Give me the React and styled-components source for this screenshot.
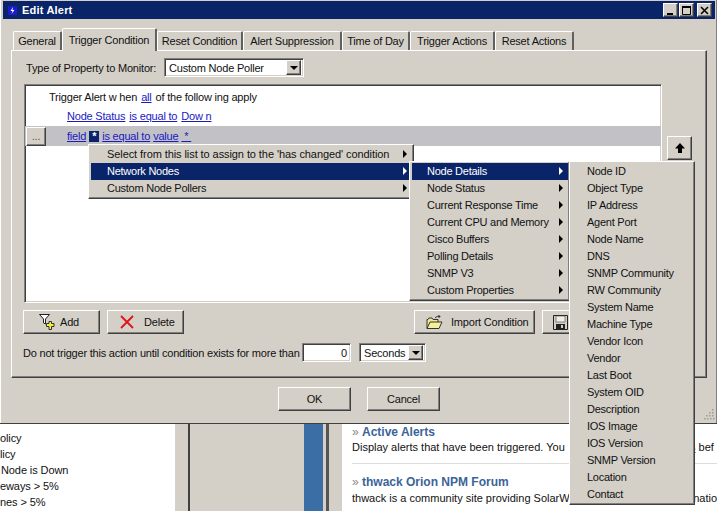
import React from "react";
import styled, { createGlobalStyle, css } from "styled-components";

const GlobalStyle = createGlobalStyle`
  html, body { margin: 0; padding: 0; background: #fff; }
  * { box-sizing: border-box; }
`;

const FACE = "#d4d0c8";
const NAVY = "#0a246a";

const raised = css`
  background: ${FACE};
  border: 1px solid;
  border-color: #fff #404040 #404040 #fff;
  box-shadow: inset -1px -1px 0 #808080;
`;
const sunken = css`
  background: #fff;
  border: 1px solid;
  border-color: #808080 #fff #fff #808080;
  box-shadow: inset 1px 1px 0 #404040, inset -1px -1px 0 ${FACE};
`;

const Page = styled.div`
  position: relative;
  width: 717px;
  height: 511px;
  overflow: hidden;
  font-family: "Liberation Sans", Arial, sans-serif;
  font-size: 11px;
  letter-spacing: -0.2px;
  color: #111;
`;

const Dialog = styled.div`
  position: relative;
  height: 424px;
  padding: 1px 2px 0 3px;
  background: ${FACE};
  border-bottom: 1px solid #404040;
  box-shadow: inset 1px 0 0 #fff, inset -1px 0 0 #808080;
`;

const TitleBar = styled.div`
  display: flex;
  align-items: center;
  height: 18px;
  padding: 0 3px 0 5px;
  gap: 5px;
  background: ${NAVY};
  color: #fff;
  font-weight: bold;
  letter-spacing: 0.2px;
`;
const TitleText = styled.span`
  flex: 1;
`;
const WinButtons = styled.div`
  display: flex;
`;
const WinButton = styled.div`
  ${raised}
  display: flex;
  align-items: center;
  justify-content: center;
  width: 15px;
  height: 14px;
  margin-left: ${(p) => p.$gap || 0}px;
`;

const TabStrip = styled.div`
  display: flex;
  align-items: flex-end;
  height: 31px;
  margin-left: 10px;
`;
const Tab = styled.div`
  display: flex;
  align-items: center;
  justify-content: center;
  width: ${(p) => p.$w}px;
  height: ${(p) => (p.$active ? 23 : 19)}px;
  background: ${FACE};
  border: 1px solid #fff;
  border-right: 2px solid #606060;
  border-bottom: none;
  border-radius: 2px 2px 0 0;
  position: relative;
  top: ${(p) => (p.$active ? 1 : 0)}px;
  z-index: ${(p) => (p.$active ? 2 : 0)};
`;

const Panel = styled.div`
  width: 696px;
  height: 328px;
  margin-left: 8px;
  padding: 7px 12px 0 12px;
  border: 1px solid;
  border-color: #fff #404040 #404040 #fff;
  box-shadow: inset -1px -1px 0 #808080;
`;
const TypeRow = styled.div`
  display: flex;
  align-items: center;
  height: 19px;
  padding-left: 2px;
`;
const Label = styled.span`
  width: ${(p) => p.$w}px;
  white-space: nowrap;
`;
const Select = styled.div`
  ${sunken}
  display: flex;
  align-items: center;
  justify-content: space-between;
  width: ${(p) => p.$w}px;
  height: 19px;
  padding: 0 2px 0 4px;
`;
const ArrowBox = styled.div`
  ${raised}
  display: flex;
  align-items: center;
  justify-content: center;
  width: 15px;
  height: 15px;
`;
const Caret = styled.span`
  width: 0;
  height: 0;
  border-left: 4px solid transparent;
  border-right: 4px solid transparent;
  border-top: 4px solid #000;
`;

const EditorRow = styled.div`
  display: flex;
  margin-top: 7px;
`;
const Editor = styled.div`
  ${sunken}
  width: 638px;
  height: 219px;
  padding-top: 3px;
`;
const Line = styled.div`
  display: flex;
  align-items: center;
  gap: ${(p) => p.$gap}px;
  height: ${(p) => p.$h}px;
  padding-left: ${(p) => p.$indent}px;
  background: ${(p) => (p.$selected ? "#c2c1c5" : "transparent")};
`;
const Link = styled.span`
  color: #1a1ac0;
  text-decoration: underline;
`;
const DotsButton = styled.div`
  ${raised}
  display: flex;
  align-items: center;
  justify-content: center;
  width: 20px;
  height: 19px;
  margin-right: 18px;
  color: #555;
`;
const StarMark = styled.span`
  display: flex;
  align-items: center;
  justify-content: center;
  width: 10px;
  height: 11px;
  background: ${NAVY};
  color: #fff;
  font-weight: bold;
`;
const UpButton = styled.div`
  ${raised}
  display: flex;
  align-items: center;
  justify-content: center;
  width: 25px;
  height: 24px;
  margin: 52px 0 0 5px;
`;

const ActionRow = styled.div`
  display: flex;
  justify-content: space-between;
  width: 639px;
  margin: 7px 0 0 -1px;
`;
const ButtonGroup = styled.div`
  display: flex;
  gap: 7px;
`;
const Button = styled.div`
  ${raised}
  display: flex;
  align-items: center;
  justify-content: ${(p) => (p.$pad ? "flex-start" : "center")};
  gap: ${(p) => p.$gap || 0}px;
  width: ${(p) => p.$w}px;
  height: 24px;
  padding-left: ${(p) => p.$pad || 0}px;
`;

const DelayRow = styled.div`
  display: flex;
  align-items: center;
  height: 19px;
  margin: 9px 0 0 -1px;
`;
const NumberBox = styled.div`
  ${sunken}
  display: flex;
  align-items: center;
  justify-content: flex-end;
  width: 49px;
  height: 19px;
  margin-right: 8px;
  padding-right: 3px;
`;

const Footer = styled.div`
  display: flex;
  justify-content: center;
  gap: 16px;
  margin-top: 9px;
`;
const Grip = styled.svg`
  position: absolute;
  right: 2px;
  bottom: 3px;
`;

const Behind = styled.div`
  display: flex;
  height: 87px;
`;
const ListPane = styled.div`
  width: 175px;
  padding-top: 6px;
  background: #fff;
  overflow: hidden;
  letter-spacing: -0.1px;
`;
const ListLine = styled.div`
  height: 16px;
  line-height: 16px;
  padding-left: ${(p) => p.$pad || 0}px;
  white-space: nowrap;
`;
const Strip = styled.div`
  width: ${(p) => p.$w}px;
  background: ${(p) => p.$c};
`;
const NewsPane = styled.div`
  flex: 1;
  padding: 0 0 0 11px;
  background: #fff;
  white-space: nowrap;
  overflow: hidden;
  letter-spacing: 0;
`;
const NewsItem = styled.div`
  height: 40px;
  margin-left: -1px;
  padding-top: ${(p) => p.$top}px;
  border-bottom: ${(p) => (p.$rule ? "1px solid #dcdcdc" : "none")};
`;
const NewsTitle = styled.div`
  height: ${(p) => p.$h}px;
  color: #3b6498;
  font-weight: bold;
  font-size: 12px;
`;
const Quote = styled.span`
  color: #888;
  font-weight: normal;
`;
const NewsText = styled.div`
  display: flex;
  height: 16px;
  line-height: 16px;
`;
const NewsLead = styled.span`
  width: ${(p) => p.$w}px;
  white-space: nowrap;
`;

const Menu = styled.div`
  ${raised}
  position: absolute;
  left: ${(p) => p.$left}px;
  top: ${(p) => p.$top}px;
  width: ${(p) => p.$w}px;
  padding: 1px 1px 1px 2px;
  z-index: ${(p) => p.$z};
`;
const MenuItem = styled.div`
  display: flex;
  align-items: center;
  justify-content: space-between;
  height: 17px;
  padding: 0 5px 1px ${(p) => p.$indent}px;
  background: ${(p) => (p.$on ? NAVY : "transparent")};
  color: ${(p) => (p.$on ? "#fff" : "#111")};
  letter-spacing: ${(p) => p.$track ?? -0.25}px;
  white-space: nowrap;
`;
const MenuArrow = styled.span`
  width: 0;
  height: 0;
  border-top: 4px solid transparent;
  border-bottom: 4px solid transparent;
  border-left: 4px solid ${(p) => (p.$on ? "#fff" : "#000")};
`;

const AppIcon = () => (
  <svg width="9" height="9" viewBox="0 0 9 9">
    <rect width="9" height="9" fill="#1c1ccc" />
    <path d="M5 1 L2.5 5 H4.5 L3.5 8 L6.5 4 H4.5 Z" fill="#fff" />
  </svg>
);
const MinGlyph = () => (
  <svg width="9" height="9" viewBox="0 0 9 9">
    <rect x="1" y="7" width="6" height="2" fill="#000" />
  </svg>
);
const MaxGlyph = () => (
  <svg width="9" height="9" viewBox="0 0 9 9">
    <path d="M0.5 1.5 H8.5 V8.5 H0.5 Z" fill="none" stroke="#000" />
    <rect y="0" width="9" height="2" fill="#000" />
  </svg>
);
const CloseGlyph = () => (
  <svg width="9" height="9" viewBox="0 0 9 9">
    <path d="M1 1 L8 8 M8 1 L1 8" stroke="#000" strokeWidth="1.6" />
  </svg>
);
const UpArrow = () => (
  <svg width="12" height="12" viewBox="0 0 12 12">
    <path d="M6 1 L11 6.5 H8 V11 H4 V6.5 H1 Z" fill="#000" />
  </svg>
);
const FilterAdd = () => (
  <svg width="16" height="17" viewBox="0 0 16 17">
    <path d="M0.5 0.5 H10.5 L6.5 5 V10 L4.5 9 V5 Z" fill="#fff" stroke="#222" />
    <path d="M7.5 9.5 H10 V7.5 H12.5 V9.5 H15 V12.5 H12.5 V15.5 H10 V12.5 H7.5 Z" fill="#f6ee3c" stroke="#333" />
  </svg>
);
const RedCross = () => (
  <svg width="14" height="14" viewBox="0 0 14 14">
    <path d="M1 1 L13 13 M13 1 L1 13" stroke="#e0121c" strokeWidth="1.8" />
  </svg>
);
const FolderOpen = () => (
  <svg width="17" height="15" viewBox="0 0 17 15">
    <path d="M1 13.5 V4.5 H2 L3 3 H6 L7 4.5 H12 V7" fill="#f3e98c" stroke="#333" />
    <path d="M1 13.5 L4 7 H16 L13 13.5 Z" fill="#f6ef9c" stroke="#333" />
    <path d="M9 3 Q11 0.5 14 1.5 M14 1.5 L12.5 0 M14 1.5 L12.5 3" fill="none" stroke="#333" />
  </svg>
);
const Floppy = () => (
  <svg width="15" height="15" viewBox="0 0 15 15">
    <path d="M0.5 0.5 H14.5 V14.5 H0.5 Z" fill="#d4d0c8" stroke="#222" />
    <rect x="3" y="1" width="9" height="6" fill="#eef0e8" stroke="#444" strokeWidth="0.6" />
    <rect x="3" y="9" width="9" height="5.5" fill="#222" />
    <rect x="8" y="10" width="2" height="3" fill="#d4d0c8" />
  </svg>
);
const GripDots = () => (
  <Grip width="11" height="11" viewBox="0 0 11 11">
    {[[8, 0], [5, 3], [8, 3], [2, 6], [5, 6], [8, 6], [0, 9], [3, 9], [6, 9], [9, 9]].map(([x, y]) => (
      <rect key={`${x}-${y}`} x={x} y={y} width="1.5" height="1.5" fill="#a09c94" />
    ))}
  </Grip>
);

const tabs = [
  { label: "General", w: 49 },
  { label: "Trigger Condition", w: 95, active: true },
  { label: "Reset Condition", w: 86 },
  { label: "Alert Suppression", w: 99 },
  { label: "Time of Day", w: 68 },
  { label: "Trigger Actions", w: 85 },
  { label: "Reset Actions", w: 79 },
];
const rootItems = [
  { label: "Select from this list to assign to the 'has changed' condition", track: -0.08 },
  { label: "Network Nodes" },
  { label: "Custom Node Pollers" },
];
const groupItems = ["Node Details", "Node Status", "Current Response Time", "Current CPU and Memory", "Cisco Buffers", "Polling Details", "SNMP V3", "Custom Properties"];
const fieldItems = ["Node ID", "Object Type", "IP Address", "Agent Port", "Node Name", "DNS", "SNMP Community", "RW Community", "System Name", "Machine Type", "Vendor Icon", "Vendor", "Last Boot", "System OID", "Description", "IOS Image", "IOS Version", "SNMP Version", "Location", "Contact"];
const listLines = [
  { text: "olicy" },
  { text: "licy" },
  { text: "Node is Down", pad: 1 },
  { text: "eways > 5%" },
  { text: "nes > 5%" },
];

export default function App() {
  return (
    <Page>
      <GlobalStyle />
      <Dialog>
        <TitleBar>
          <AppIcon />
          <TitleText>Edit Alert</TitleText>
          <WinButtons>
            <WinButton><MinGlyph /></WinButton>
            <WinButton $gap={1}><MaxGlyph /></WinButton>
            <WinButton $gap={3}><CloseGlyph /></WinButton>
          </WinButtons>
        </TitleBar>
        <TabStrip>
          {tabs.map((tab) => (
            <Tab key={tab.label} $w={tab.w} $active={tab.active}>{tab.label}</Tab>
          ))}
        </TabStrip>
        <Panel>
          <TypeRow>
            <Label $w={138}>Type of Property to Monitor:</Label>
            <Select $w={140}>
              <span>Custom Node Poller</span>
              <ArrowBox><Caret /></ArrowBox>
            </Select>
          </TypeRow>
          <EditorRow>
            <Editor>
              <Line $h={18} $indent={24} $gap={4}>
                <span>Trigger Alert w hen</span> <Link>all</Link> <span>of the follow ing apply</span>
              </Line>
              <Line $h={20} $indent={42} $gap={4}>
                <Link>Node Status</Link> <Link>is equal to</Link> <Link>Dow n</Link>
              </Line>
              <Line $h={20} $indent={1} $gap={3} $selected>
                <DotsButton>...</DotsButton>
                <Link>field</Link>
                <StarMark>*</StarMark>
                <Link>is equal to</Link>
                <Link>value</Link>
                <Link>&nbsp;*&nbsp;</Link>
              </Line>
            </Editor>
            <UpButton><UpArrow /></UpButton>
          </EditorRow>
          <ActionRow>
            <ButtonGroup>
              <Button $w={77} $pad={15} $gap={5}><FilterAdd />Add</Button>
              <Button $w={77} $pad={12} $gap={10}><RedCross />Delete</Button>
            </ButtonGroup>
            <ButtonGroup>
              <Button $w={121} $pad={11} $gap={8}><FolderOpen />Import Condition</Button>
              <Button $w={120} $pad={10}><Floppy /></Button>
            </ButtonGroup>
          </ActionRow>
          <DelayRow>
            <Label $w={279}>Do not trigger this action until condition exists for more than</Label>
            <NumberBox>0</NumberBox>
            <Select $w={67}>
              <span>Seconds</span>
              <ArrowBox><Caret /></ArrowBox>
            </Select>
          </DelayRow>
        </Panel>
        <Footer>
          <Button $w={73}>OK</Button>
          <Button $w={73}>Cancel</Button>
        </Footer>
        <GripDots />
      </Dialog>
      <Behind>
        <ListPane>
          {listLines.map((line) => (
            <ListLine key={line.text} $pad={line.pad}>{line.text}</ListLine>
          ))}
        </ListPane>
        <Strip $w={13} $c={FACE} />
        <Strip $w={2} $c="#404040" />
        <Strip $w={114} $c={FACE} />
        <Strip $w={19} $c="#3a6ea5" />
        <Strip $w={3} $c={FACE} />
        <Strip $w={3} $c="#555" />
        <Strip $w={13} $c={FACE} />
        <NewsPane>
          <NewsItem $top={1} $rule>
            <NewsTitle $h={14}><Quote>» </Quote>Active Alerts</NewsTitle>
            <NewsText>
              <NewsLead $w={338}>Display alerts that have been triggered. You</NewsLead>
              <span><Link>s</Link> bef</span>
            </NewsText>
          </NewsItem>
          <NewsItem $top={11}>
            <NewsTitle $h={15}><Quote>» </Quote>thwack Orion NPM Forum</NewsTitle>
            <NewsText>
              <NewsLead $w={343}>thwack is a community site providing SolarWin</NewsLead>
              <span>natio</span>
            </NewsText>
          </NewsItem>
        </NewsPane>
      </Behind>
      <Menu $left={88} $top={144} $w={326} $z={3}>
        {rootItems.map((item, i) => (
          <MenuItem key={item.label} $indent={16} $on={i === 1} $track={item.track}>
            {item.label}
            <MenuArrow $on={i === 1} />
          </MenuItem>
        ))}
      </Menu>
      <Menu $left={409} $top={161} $w={161} $z={4}>
        {groupItems.map((item, i) => (
          <MenuItem key={item} $indent={15} $on={i === 0}>
            {item}
            <MenuArrow $on={i === 0} />
          </MenuItem>
        ))}
      </Menu>
      <Menu $left={569} $top={161} $w={126} $z={5}>
        {fieldItems.map((item) => (
          <MenuItem key={item} $indent={15}>{item}</MenuItem>
        ))}
      </Menu>
    </Page>
  );
}
